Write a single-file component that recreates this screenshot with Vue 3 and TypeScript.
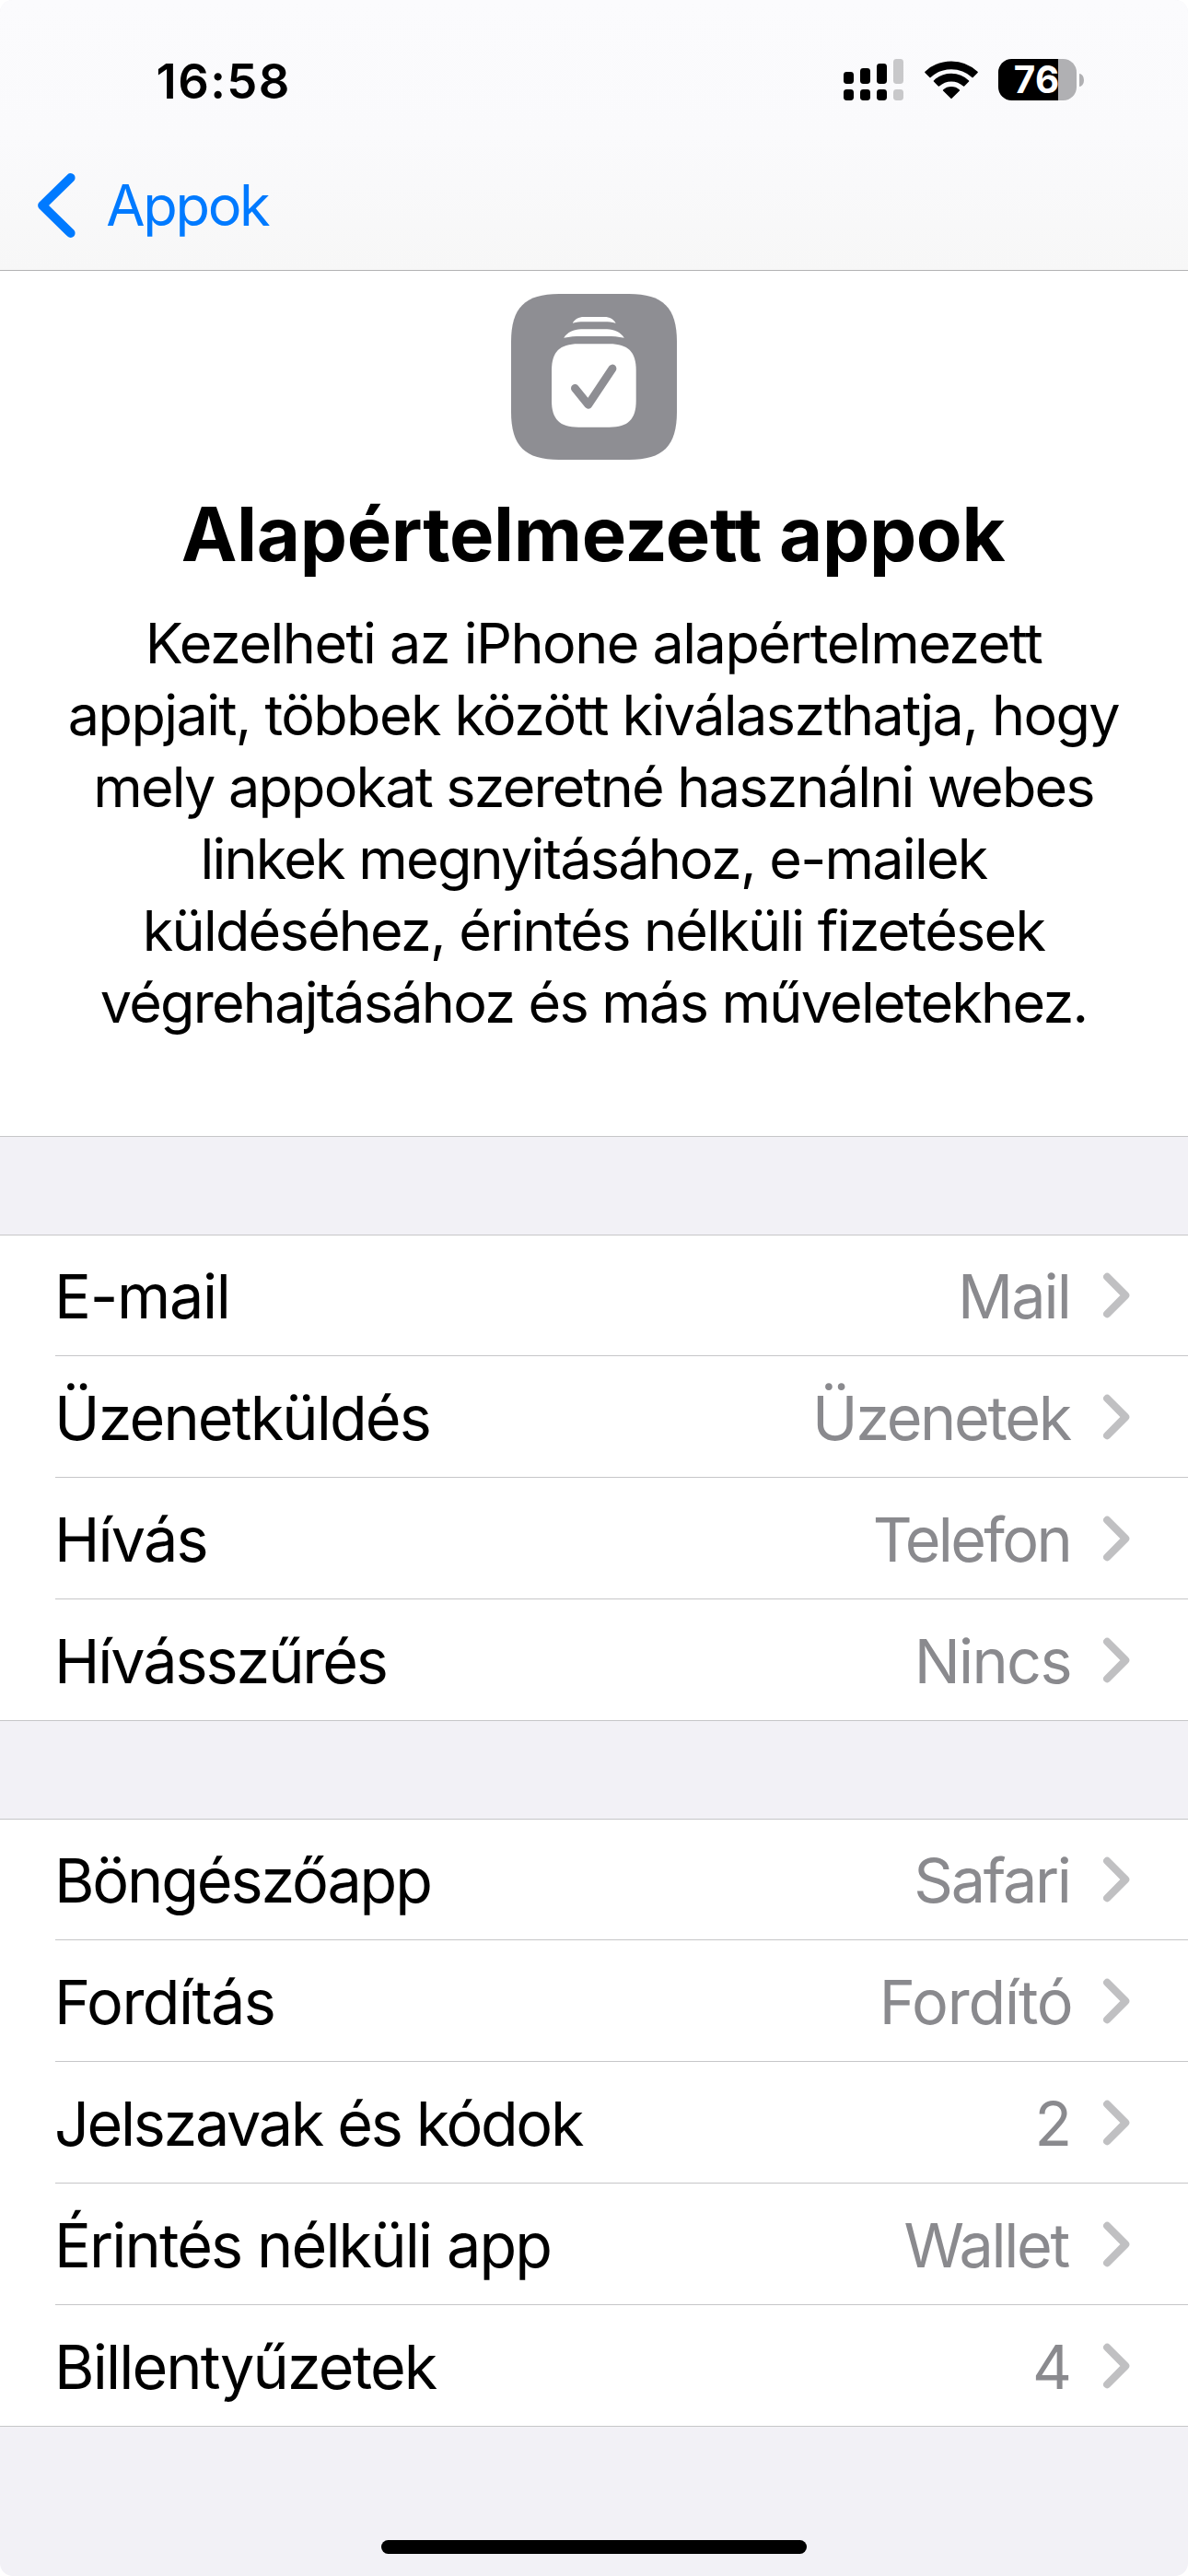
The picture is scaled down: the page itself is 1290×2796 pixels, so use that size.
<script setup lang="ts">
interface Line {
  text: string
  tracking: number
}

interface Row {
  label: string
  tracking: number
  value: string
  valueTracking: number
  trim: number
}

const intro: Line[] = [
  { text: 'Kezelheti az iPhone alapértelmezett', tracking: -1.51 },
  { text: 'appjait, többek között kiválaszthatja, hogy', tracking: -1.58 },
  { text: 'mely appokat szeretné használni webes', tracking: -1.8 },
  { text: 'linkek megnyitásához, e-mailek', tracking: -1.76 },
  { text: 'küldéséhez, érintés nélküli fizetések', tracking: -1.77 },
  { text: 'végrehajtásához és más műveletekhez.', tracking: -1.76 },
]

const sections: Row[][] = [
  [
    { label: 'E-mail', tracking: -1.3, value: 'Mail', valueTracking: -1.9, trim: 3 },
    { label: 'Üzenetküldés', tracking: -1.86, value: 'Üzenetek', valueTracking: -2.31, trim: 3 },
    { label: 'Hívás', tracking: -1.85, value: 'Telefon', valueTracking: -2.7, trim: 3 },
    { label: 'Hívásszűrés', tracking: -2.1, value: 'Nincs', valueTracking: -1.7, trim: 2.2 },
  ],
  [
    { label: 'Böngészőapp', tracking: -2.15, value: 'Safari', valueTracking: -2.3, trim: 3.4 },
    { label: 'Fordítás', tracking: -1.55, value: 'Fordító', valueTracking: -1.2, trim: 0.5 },
    { label: 'Jelszavak és kódok', tracking: -2.34, value: '2', valueTracking: 0, trim: 1 },
    { label: 'Érintés nélküli app', tracking: -1.88, value: 'Wallet', valueTracking: -2.3, trim: 5 },
    { label: 'Billentyűzetek', tracking: -1.86, value: '4', valueTracking: 0, trim: 1 },
  ],
]
</script>

<template>
  <div class="screen">
    <header class="header">
      <div class="status">
        <span class="time">16:58</span>
        <div class="indicators">
          <svg class="signal" width="65" height="45" viewBox="0 0 65 45">
            <g fill="#000">
              <rect x="0" y="14" width="11" height="13" rx="3.4" />
              <rect x="18" y="10" width="11" height="17" rx="3.4" />
              <rect x="36" y="5" width="11" height="22" rx="3.4" />
              <rect x="0" y="33" width="11" height="12" rx="3.4" />
              <rect x="18" y="33" width="11" height="12" rx="3.4" />
              <rect x="36" y="33" width="11" height="12" rx="3.4" />
            </g>
            <g fill="#c8c8ca">
              <rect x="54" y="0" width="11" height="27" rx="3.4" />
              <rect x="54" y="33" width="11" height="12" rx="3.4" />
            </g>
          </svg>
          <svg class="wifi" width="58" height="45" viewBox="0 0 58 45">
            <g fill="#000" stroke="#000" stroke-width="1.6" stroke-linejoin="round">
              <path d="M1 14.4 A40.6 40.6 0 0 1 57 14.4 L52 19.4 A34 34 0 0 0 6 19.4 Z" />
              <path d="M10.5 24 A26.5 26.5 0 0 1 47.5 24 L42.6 29 A20 20 0 0 0 15.4 29 Z" />
              <path d="M20.6 34 A12.6 12.6 0 0 1 37.4 34 L29 42.2 Z" />
            </g>
          </svg>
          <div class="battery">
            <div class="cell"><span class="level">76</span></div>
            <div class="cap"></div>
          </div>
        </div>
      </div>
      <div class="nav">
        <svg width="41" height="70" viewBox="0 0 41 70">
          <path d="M35.7 4.9 L5 35 L35.7 65.1" fill="none" stroke="#007aff" stroke-width="9.8" stroke-linecap="round" stroke-linejoin="round" />
        </svg>
        <span class="back">Appok</span>
      </div>
    </header>

    <section class="hero">
      <svg class="badge" width="180" height="180" viewBox="0 0 180 180">
        <path fill="#8e8e93" d="M52 0H128C165 0 180 15 180 52V128C180 165 165 180 128 180H52C15 180 0 165 0 128V52C0 15 15 0 52 0Z" />
        <g fill="#fff">
          <path d="M66.7 31.7C69 27.6 73.5 25 79 25H101.4C107 25 111.4 27.6 113.7 31.7C109 30.4 106 30.2 101.4 30.2H79C74.4 30.2 71.4 30.4 66.7 31.7Z" />
          <path d="M57.2 47.8C61 41.7 68 38.3 76 38.3H104C112 38.3 119 41.7 122.8 47.8C116 46.2 111 45.9 104 45.9H76C69 45.9 64 46.2 57.2 47.8Z" />
          <path d="M73 54.3H106.7C127 54.3 135.7 63 135.7 83V116C135.7 136 127 144.7 106.7 144.7H73C52.7 144.7 44 136 44 116V83C44 63 52.7 54.3 73 54.3Z" />
        </g>
        <path d="M69.4 102.4L83.8 120.3L110 81" fill="none" stroke="#8e8e93" stroke-width="8.8" stroke-linecap="round" stroke-linejoin="round" />
      </svg>
      <h1 class="title">Alapértelmezett appok</h1>
      <p class="intro">
        <span v-for="line in intro" :key="line.text" class="line" :style="{ letterSpacing: line.tracking + 'px' }">{{ line.text }}</span>
      </p>
    </section>

    <section v-for="(rows, i) in sections" :key="i" class="group">
      <div v-for="row in rows" :key="row.label" class="row">
        <span class="text" :style="{ letterSpacing: row.tracking + 'px' }">{{ row.label }}</span>
        <span class="text value" :style="{ letterSpacing: row.valueTracking + 'px', marginRight: row.trim + 'px' }">{{ row.value }}</span>
        <svg class="chevron" width="29" height="50" viewBox="0 0 29 50">
          <path d="M4.2 4.8L24.2 25L4.2 45.2" fill="none" stroke="#c0c0c2" stroke-width="8.2" stroke-linecap="round" stroke-linejoin="round" />
        </svg>
      </div>
    </section>

    <div class="home"></div>
  </div>
</template>

<style>
body {
  margin: 0;
  background: #fff;
}
</style>

<style scoped>
.screen {
  display: flex;
  flex-direction: column;
  box-sizing: border-box;
  width: 1290px;
  height: 2796px;
  overflow: hidden;
  border-radius: 14px;
  background: #f2f1f6;
  color: #000;
  font-family: Inter, "Liberation Sans", sans-serif;
  font-variant-ligatures: none;
  white-space: nowrap;
}

.header {
  box-sizing: border-box;
  flex: none;
  height: 294px;
  border-bottom: 1px solid #b2b2b4;
  background: linear-gradient(#fbfbfd 0%, #fafafc 50%, #f7f7f7 100%);
}

.status {
  display: flex;
  align-items: center;
  justify-content: space-between;
  height: 45px;
  padding: 64px 113px 0 169.5px;
}

.time {
  padding-top: 3px;
  font-size: 52.6px;
  font-weight: 600;
  line-height: 60px;
  letter-spacing: 1.4px;
}

.indicators {
  display: flex;
  align-items: center;
}

.wifi {
  margin-left: 23px;
}

.battery {
  display: flex;
  align-items: center;
  gap: 3px;
  margin-left: 22px;
}

.cell {
  box-sizing: border-box;
  width: 85px;
  height: 45px;
  padding-left: 16.8px;
  border-radius: 14.5px;
  background: linear-gradient(90deg, #000 65px, #b0b0b3 65px);
}

.level {
  display: block;
  color: #fff;
  font-size: 40.4px;
  font-weight: 650;
  line-height: 46px;
  letter-spacing: 0.3px;
}

.cap {
  width: 5px;
  height: 14px;
  border-radius: 0 5px 5px 0 / 0 7px 7px 0;
  background: #b0b0b3;
}

.nav {
  display: flex;
  align-items: center;
  height: 70px;
  padding: 79px 0 0 41px;
}

.back {
  margin-left: 33.2px;
  color: #007aff;
  font-size: 61.3px;
  line-height: 70px;
  letter-spacing: -2.3px;
}

.hero {
  display: flex;
  flex: none;
  flex-direction: column;
  align-items: center;
  box-sizing: border-box;
  height: 940px;
  padding-top: 25px;
  border-bottom: 1px solid #c6c6c8;
  background: #fff;
}

.badge {
  flex: none;
}

.title {
  margin: 30px 2px 0 0;
  font-size: 81.4px;
  font-weight: 700;
  line-height: 101px;
  letter-spacing: -0.34px;
}

.intro {
  margin: 29px 1px 0 0;
  font-size: 61.1px;
  line-height: 78px;
  text-align: center;
}

.line {
  display: block;
}

.group {
  flex: none;
  border-top: 1px solid #c6c6c8;
  background: #fff;
}

.hero + .group,
.group + .group {
  margin-top: 106px;
}

.row {
  position: relative;
  display: flex;
  align-items: center;
  box-sizing: border-box;
  height: 132px;
  padding: 0 63px 1px 59px;
}

.row:first-child {
  height: 131px;
}

.row::after {
  position: absolute;
  right: 0;
  bottom: 0;
  left: 60px;
  height: 1px;
  background: #c6c6c8;
  content: "";
}

.row:last-child::after {
  left: 0;
}

.text {
  padding-top: 2px;
  font-size: 66.5px;
  line-height: 80px;
}

.value {
  margin-left: auto;
  color: #8a8a8e;
}

.chevron {
  flex: none;
  margin-left: 33px;
}

.home {
  flex: none;
  align-self: center;
  width: 462px;
  height: 15px;
  margin-top: 123px;
  border-radius: 8px;
  background: #000;
}
</style>
